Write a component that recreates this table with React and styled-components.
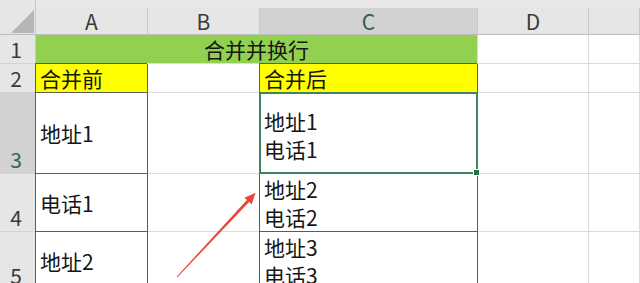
import React from "react";
import styled, { createGlobalStyle } from "styled-components";

const FONT = `"Microsoft YaHei", "Noto Sans CJK SC", sans-serif`;
const GRID = "#dcdcdc";
const RULE = "#5c5c5c";
const HEAD_BG = "#e6e6e6";
const HEAD_ACTIVE = "#d2d2d2";
const SELECT = "#3f8460";

const GlobalStyle = createGlobalStyle`
  html, body { margin: 0; padding: 0; background: #fff; }
  body { font-family: ${FONT}; }
`;

const Sheet = styled.div`
  position: relative;
  display: grid;
  grid-template-columns: 36px 112px 112px 218px 111px 1fr;
  grid-template-rows: 8px 27px 29px 29px 81px 58px 58px;
  width: 640px;
  height: 283px;
  overflow: hidden;
  background: #fff;
  font-family: ${FONT};
  color: #151515;
`;

const Corner = styled.div`
  grid-row: 1 / 3;
  grid-column: 1;
  box-sizing: border-box;
  background: ${HEAD_BG};
  border-right: 1px solid #cacaca;
  border-bottom: 1px solid #bdbdbd;
  display: flex;
  align-items: flex-end;
  justify-content: flex-end;
  padding: 0 1px 1px 0;

  &::after {
    content: "";
    width: 23px;
    height: 23px;
    background: #b5b5b5;
    clip-path: polygon(100% 0, 100% 100%, 0 100%);
  }
`;

const TopStrip = styled.div`
  grid-row: 1;
  grid-column: 2 / -1;
  background: #e8e8e8;
`;

const ColHead = styled.div`
  grid-row: 2;
  box-sizing: border-box;
  background: ${(p) => (p.$active ? HEAD_ACTIVE : HEAD_BG)};
  color: ${(p) => (p.$active ? "#2b5e45" : "#3a3a3a")};
  border-right: 1px solid #c9c9c9;
  border-bottom: 1px solid #bdbdbd;
  display: flex;
  align-items: flex-end;
  justify-content: center;
  padding-bottom: 2px;
  font-size: 21px;
  line-height: 21px;
`;

const RowHead = styled.div`
  grid-column: 1;
  box-sizing: border-box;
  background: ${(p) => (p.$active ? HEAD_ACTIVE : HEAD_BG)};
  color: ${(p) => (p.$active ? "#2b6b4a" : "#3a3a3a")};
  border-right: 1px solid #c9c9c9;
  border-bottom: 1px solid #d2d2d2;
  display: flex;
  align-items: flex-end;
  justify-content: center;
  padding: 0 3px 3px 0;
  font-size: 21px;
  line-height: 21px;
`;

const Cell = styled.div`
  position: ${(p) => (p.$selected ? "relative" : "static")};
  grid-column: ${(p) => p.$span || "auto"};
  box-sizing: border-box;
  background: ${(p) => p.$fill || "#fff"};
  border-right: 1px solid ${(p) => (p.$boxed ? RULE : GRID)};
  border-bottom: 1px solid ${(p) => (p.$boxed ? RULE : GRID)};
  box-shadow: ${(p) => (p.$boxed ? `-1px -1px 0 0 ${RULE}` : "none")};
  display: flex;
  flex-direction: column;
  justify-content: center;
  align-items: ${(p) => (p.$centered ? "center" : "flex-start")};
  padding: ${(p) => (p.$centered ? "0" : "0 0 0 4px")};
  padding-top: ${(p) => p.$nudge || 0}px;
  font-size: 21px;
  line-height: 28px;
  white-space: nowrap;
`;

const Line = styled.span`
  display: block;
`;

const SelectionFrame = styled.div`
  position: absolute;
  top: -1px;
  left: -1px;
  right: -1px;
  bottom: -1px;
  border: 2px solid ${SELECT};
  pointer-events: none;
`;

const FillHandle = styled.div`
  position: absolute;
  right: -4px;
  bottom: -4px;
  width: 5px;
  height: 5px;
  background: #217346;
  border: 1px solid #fff;
`;

const ArrowLayer = styled.svg`
  position: absolute;
  left: 0;
  top: 0;
  width: 640px;
  height: 283px;
  pointer-events: none;
`;

const columns = ["A", "B", "C", "D", ""];

const rows = [
  {
    n: "1",
    cells: [
      { span: "2 / 5", fill: "#92d050", centered: true, lines: ["合并并换行"] },
      {},
      {},
    ],
  },
  {
    n: "2",
    cells: [
      { fill: "#ffff00", boxed: true, lines: ["合并前"] },
      {},
      { fill: "#ffff00", boxed: true, lines: ["合并后"] },
      {},
      {},
    ],
  },
  {
    n: "3",
    active: true,
    cells: [
      { boxed: true, lines: ["地址1"] },
      {},
      { boxed: true, selected: true, nudge: 3, lines: ["地址1", "电话1"] },
      {},
      {},
    ],
  },
  {
    n: "4",
    cells: [
      { boxed: true, lines: ["电话1"] },
      {},
      { boxed: true, lines: ["地址2", "电话2"] },
      {},
      {},
    ],
  },
  {
    n: "5",
    cells: [
      { boxed: true, lines: ["地址2"] },
      {},
      { boxed: true, lines: ["地址3", "电话3"] },
      {},
      {},
    ],
  },
];

function Arrow() {
  // tapered shaft from the tail up to a triangular head
  const shaft =
    "177.4,277.3 249.1,202.1 251.6,204.4 255.6,192.8 244.4,197.8 246.9,200.0 176.6,276.7";
  return (
    <ArrowLayer viewBox="0 0 640 283">
      <polygon points={shaft} fill="#e8453c" />
    </ArrowLayer>
  );
}

export default function App() {
  return (
    <>
      <GlobalStyle />
      <Sheet>
        <Corner />
        <TopStrip />
        {columns.map((c) => (
          <ColHead key={c || "E"} $active={c === "C"}>
            {c}
          </ColHead>
        ))}
        {rows.map((row) => (
          <React.Fragment key={row.n}>
            <RowHead $active={row.active}>{row.n}</RowHead>
            {row.cells.map((cell, i) => (
              <Cell
                key={i}
                $span={cell.span}
                $fill={cell.fill}
                $boxed={cell.boxed}
                $centered={cell.centered}
                $selected={cell.selected}
                $nudge={cell.nudge}
              >
                {(cell.lines || []).map((t) => (
                  <Line key={t}>{t}</Line>
                ))}
                {cell.selected && (
                  <SelectionFrame>
                    <FillHandle />
                  </SelectionFrame>
                )}
              </Cell>
            ))}
          </React.Fragment>
        ))}
        <Arrow />
      </Sheet>
    </>
  );
}
